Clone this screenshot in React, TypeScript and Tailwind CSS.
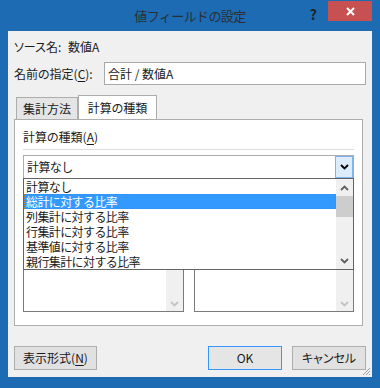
import React from "react"

const font = "font-['Noto_Sans_CJK_JP',sans-serif]"
const palt = "[font-feature-settings:'palt']"

function Chevron({ up, className }: { up?: boolean; className?: string }) {
  return (
    <svg width="9" height="6" viewBox="0 0 9 6" className={className}>
      <polyline
        points={up ? "1,5 4.5,1.5 8,5" : "1,1 4.5,4.5 8,1"}
        fill="none"
        stroke="currentColor"
        strokeWidth="1.8"
      />
    </svg>
  )
}

function U({ children }: { children: React.ReactNode }) {
  return <span className="underline underline-offset-2">{children}</span>
}

const items = [
  "計算なし",
  "総計に対する比率",
  "列集計に対する比率",
  "行集計に対する比率",
  "基準値に対する比率",
  "親行集計に対する比率",
]

function EmptyList() {
  return (
    <div className="flex h-full flex-1 border border-[#7a7a7a] bg-white">
      <div className="flex-1" />
      <div className="flex w-[17px] flex-col justify-end bg-[#f0f0f0] pb-[4px] text-[#c4c4c4]">
        <Chevron className="mx-auto" />
      </div>
    </div>
  )
}

export default function App() {
  return (
    <div className={`${font} flex h-[388px] w-[380px] flex-col bg-[#1c6bb3] text-[12px] text-[#1a1a1a]`}>
      {/* title bar */}
      <div className="relative flex h-[31px] items-center justify-center">
        <span className="text-[13px] tracking-[-0.6px] text-[#2a2f36]">値フィールドの設定</span>
        <div className="absolute right-[8px] top-[1px] flex items-start">
          <span className="mr-[11px] mt-[3px] text-[14px] font-bold text-[#222]">?</span>
          <div className="flex h-[20px] w-[44px] items-center justify-center bg-[#c75050]">
            <svg width="9" height="9" viewBox="0 0 9 9">
              <path d="M1 1 L8 8 M8 1 L1 8" stroke="white" strokeWidth="2" />
            </svg>
          </div>
        </div>
      </div>

      {/* client area */}
      <div className={`${palt} relative mx-[8px] flex h-[346px] flex-col bg-[#f0f0f0] px-[6px]`}>
        <div className="flex h-[31px] items-center pt-[1px]">
          <span className="w-[54px]">ソース名:</span>
          <span>数値A</span>
        </div>

        <div className="flex h-[23px] items-center">
          <span className="w-[90px]">
            名前の指定(<U>C</U>):
          </span>
          <div className="flex h-[23px] w-[262px] items-center border border-[#a9a9a9] bg-white px-[3px]">
            合計 / 数値A
          </div>
        </div>

        {/* tabs */}
        <div className="mt-[10px] flex h-[24px] items-end pl-[2px]">
          <div className="flex h-[22px] w-[62px] items-center justify-center border border-b-0 border-[#adadad] bg-[#e5e5e5]">
            集計方法
          </div>
          <div className="-mb-px flex h-[25px] w-[79px] items-center justify-center border border-b-0 border-[#adadad] bg-white">
            計算の種類
          </div>
        </div>

        {/* panel */}
        <div className="flex h-[207px] w-[349px] flex-col border border-[#adadad] bg-white px-[8px]">
          <div className="flex h-[29px] items-end pb-[3px]">
            計算の種類(<U>A</U>)
          </div>
          <div className="h-px bg-[#dcdcdc]" />

          <div className="relative mt-[5px]">
            <div className="flex h-[24px] border border-[#abadb3] bg-white">
              <div className="flex flex-1 items-center px-[3px] tracking-[-0.6px] [font-feature-settings:normal]">
                計算なし
              </div>
              <div className="flex w-[18px] items-center justify-center border border-[#7eb4ea] bg-[#dcecfc] text-black">
                <Chevron />
              </div>
            </div>

            {/* open dropdown */}
            <div className="absolute left-0 right-0 top-[23px] z-10 flex h-[92px] border border-[#646464] bg-white">
              <div className="flex flex-1 flex-col tracking-[-0.6px] [font-feature-settings:normal]">
                {items.map((it, i) => (
                  <div
                    key={it}
                    className={
                      i === 1
                        ? "flex h-[15px] items-center border border-dotted border-[#c07020] bg-[#3399ff] px-[1px] leading-[13px] text-white"
                        : "flex h-[15px] items-center px-[2px] leading-[15px]"
                    }
                  >
                    {it}
                  </div>
                ))}
              </div>
              <div className="flex w-[17px] flex-col items-center bg-[#f0f0f0] text-[#606060]">
                <div className="flex h-[17px] items-center justify-center">
                  <Chevron up />
                </div>
                <div className="h-[21px] w-full bg-[#cdcdcd]" />
                <div className="flex-1" />
                <div className="flex h-[17px] items-center justify-center">
                  <Chevron />
                </div>
              </div>
            </div>

            <div className="mt-[8px] flex h-[125px] gap-[10px]">
              <EmptyList />
              <EmptyList />
            </div>
          </div>
        </div>

        {/* buttons */}
        <div className="mt-[20px] flex h-[24px]">
          <div className="flex w-[83px] items-center justify-center border border-[#adadad] bg-[#e1e1e1]">
            表示形式(<U>N</U>)
          </div>
          <div className="flex-1" />
          <div className="flex w-[74px] items-center justify-center border border-[#3399ff] bg-[#e5e5e5]">
            OK
          </div>
          <div className="ml-[10px] flex w-[74px] items-center justify-center border border-[#adadad] bg-[#e1e1e1]">
            キャンセル
          </div>
        </div>

        <svg width="9" height="9" viewBox="0 0 9 9" className="absolute bottom-[1px] right-[1px]">
          <path d="M8 1 L1 8 M8 4 L4 8 M8 7 L7 8" stroke="#a0a0a0" strokeWidth="1" />
        </svg>
      </div>
    </div>
  )
}
